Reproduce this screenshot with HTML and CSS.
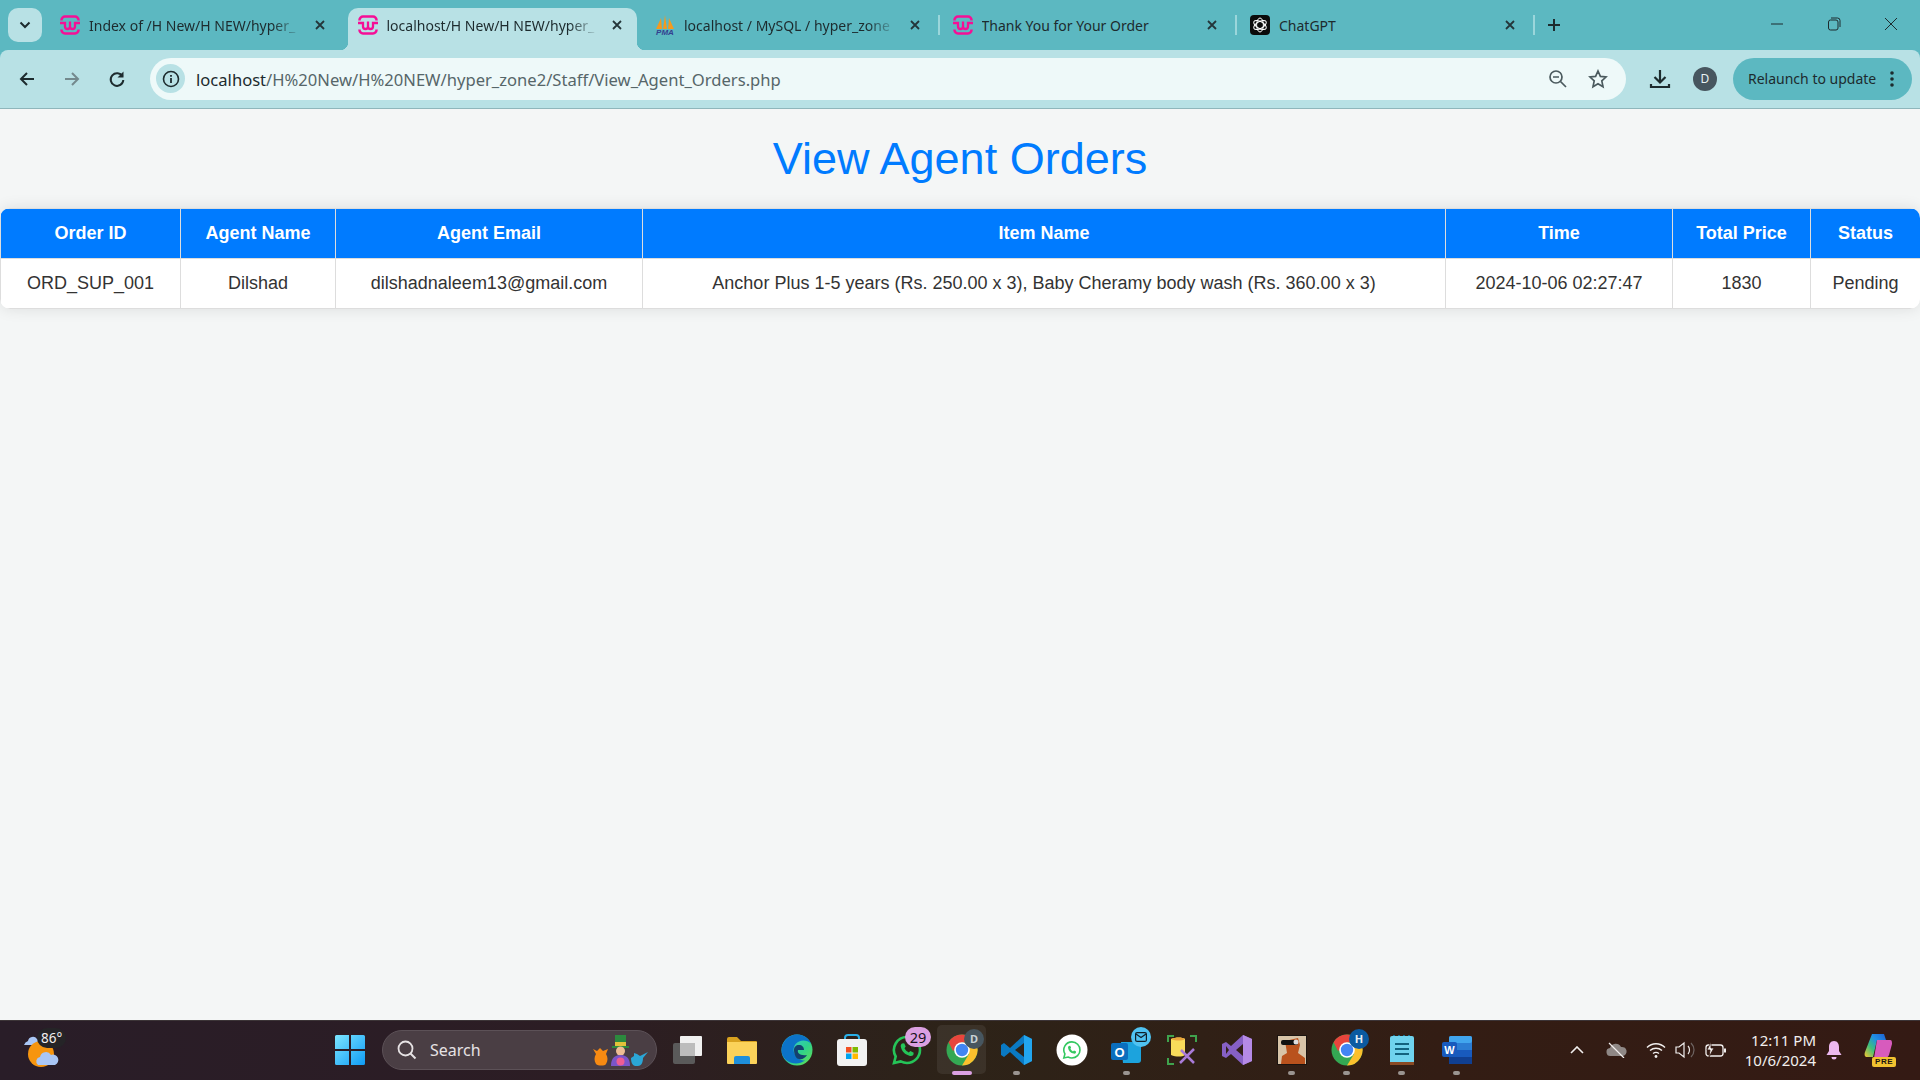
FILE: index.html
```html
<!DOCTYPE html>
<html lang="en">
<head>
  <meta charset="UTF-8">
  <title>View Agent Orders</title>
  <link rel="stylesheet" href="styles.css">
</head>
<body>

  <svg class="defs" width="0" height="0">
    <symbol id="wamp" viewBox="0 0 20 20">
      <path d="M1.500 5.500V5A3.500 3.500 0 0 1 5 1.500h10A3.500 3.500 0 0 1 18.500 5v.5M1.500 14.500v.5A3.500 3.500 0 0 0 5 18.500h10a3.500 3.500 0 0 0 3.500-3.500v-.5" fill="none" stroke="#f50f96" stroke-width="2.500"/>
      <path d="M0 8h5v3.500a2.500 2.500 0 0 0 5 0V6.500v5a2.500 2.500 0 0 0 5 0V8h5" fill="none" stroke="#f50f96" stroke-width="2.300"/>
    </symbol>
    <symbol id="close" viewBox="0 0 12 12">
      <path d="M2 2l8 8M10 2l-8 8" stroke="#24363a" stroke-width="1.800" fill="none"/>
    </symbol>
    <symbol id="chrome" viewBox="0 0 32 32">
      <circle cx="16" cy="16" r="15.500" fill="#34a853"/>
      <path d="M16 .5A15.500 15.500 0 0 1 29.400 8.200L16 8.500 7 17 2.600 8.200A15.500 15.500 0 0 1 16 .5z" fill="#e8453c"/>
      <path d="M29.400 8.200A15.500 15.500 0 0 1 16 31.500L23 20V8.500z" fill="#fbc02d"/>
      <circle cx="16" cy="16" r="7.800" fill="#fff"/>
      <circle cx="16" cy="16" r="6.200" fill="#4285f4"/>
    </symbol>
    <symbol id="whatsapp" viewBox="0 0 32 32">
      <path d="M16 3a13 13 0 0 1 0 26c-2.300 0-4.400-.6-6.300-1.600L3 29l1.700-6.500A13 13 0 0 1 16 3z" fill="none" stroke="currentColor" stroke-width="2.600"/>
      <path d="M11 9.500l2.200-.3 1.500 3.400-1.200 1.700c.9 1.900 2.300 3.200 4.200 4.100l1.700-1.300 3.300 1.600-.4 2.200c-.8 1-2.100 1.300-3.300 1-5-1.200-8.400-4.500-9.300-9.600-.1-1.100.5-2.100 1.300-2.800z" fill="currentColor"/>
    </symbol>
  </svg>

  <div class="window">

    <div class="tabstrip">
      <button class="tab-search">
        <svg width="12" height="8" viewBox="0 0 12 8"><path d="M1.500 1.500L6 6l4.500-4.500" fill="none" stroke="#1d2b2e" stroke-width="2"/></svg>
      </button>

      <div class="tab">
        <svg class="favicon"><use href="#wamp"/></svg>
        <span class="tab-title faded">Index of /H New/H NEW/hyper_</span>
        <svg class="tab-close"><use href="#close"/></svg>
      </div>
      <div class="tab active">
        <svg class="favicon"><use href="#wamp"/></svg>
        <span class="tab-title faded">localhost/H New/H NEW/hyper_</span>
        <svg class="tab-close"><use href="#close"/></svg>
      </div>
      <div class="tab">
        <svg class="favicon" viewBox="0 0 20 20">
          <path d="M1 14L6 3l1 11zM8 14L10 0l2 14zM13 14l1-11 5 11z" fill="#f39a1f"/>
          <text class="pma" x="10" y="20">PMA</text>
        </svg>
        <span class="tab-title faded">localhost / MySQL / hyper_zone</span>
        <svg class="tab-close"><use href="#close"/></svg>
      </div>
      <i class="tab-sep"></i>
      <div class="tab">
        <svg class="favicon"><use href="#wamp"/></svg>
        <span class="tab-title">Thank You for Your Order</span>
        <svg class="tab-close"><use href="#close"/></svg>
      </div>
      <i class="tab-sep"></i>
      <div class="tab">
        <svg class="favicon" viewBox="0 0 20 20">
          <rect width="20" height="20" rx="4" fill="#0b0b0b"/>
          <g fill="none" stroke="#fff" stroke-width="1">
            <ellipse cx="10" cy="10" rx="3.400" ry="7"/>
            <ellipse cx="10" cy="10" rx="3.400" ry="7" transform="rotate(60 10 10)"/>
            <ellipse cx="10" cy="10" rx="3.400" ry="7" transform="rotate(120 10 10)"/>
          </g>
        </svg>
        <span class="tab-title">ChatGPT</span>
        <svg class="tab-close"><use href="#close"/></svg>
      </div>
      <i class="tab-sep"></i>

      <svg class="new-tab" width="14" height="14" viewBox="0 0 14 14"><path d="M7 1v12M1 7h12" stroke="#1d2b2e" stroke-width="2"/></svg>

      <div class="win-controls">
        <svg width="14" height="14" viewBox="0 0 14 14"><path d="M1 7h12" stroke="#1d2b2e"/></svg>
        <svg width="14" height="14" viewBox="0 0 14 14"><rect x="1.500" y="3" width="9.500" height="10" rx="2" fill="none" stroke="#1d2b2e"/><path d="M4 1h6.500A2.500 2.500 0 0 1 13 3.500V10" fill="none" stroke="#1d2b2e"/></svg>
        <svg width="14" height="14" viewBox="0 0 14 14"><path d="M1 1l12 12M13 1L1 13" stroke="#1d2b2e"/></svg>
      </div>
    </div>

    <div class="toolbar">
      <div class="nav-buttons">
        <svg width="18" height="18" viewBox="0 0 18 18"><path d="M16 9H3M9 3L3 9l6 6" fill="none" stroke="#1d2b2e" stroke-width="2"/></svg>
        <svg width="18" height="18" viewBox="0 0 18 18"><path d="M2 9h13M9 3l6 6-6 6" fill="none" stroke="#74898d" stroke-width="2"/></svg>
        <svg width="18" height="18" viewBox="0 0 18 18"><path d="M14.500 6.500A6.300 6.300 0 1 0 15.300 10" fill="none" stroke="#1d2b2e" stroke-width="2"/><path d="M15.500 1.500v6h-6z" fill="#1d2b2e"/></svg>
      </div>

      <div class="omnibox">
        <span class="site-info">
          <svg width="18" height="18" viewBox="0 0 18 18"><circle cx="9" cy="9" r="7.500" fill="none" stroke="#1d2b2e" stroke-width="1.600"/><path d="M9 8v5M9 5v1.800" stroke="#1d2b2e" stroke-width="1.800"/></svg>
        </span>
        <span class="url"><b>localhost</b>/H%20New/H%20NEW/hyper_zone2/Staff/View_Agent_Orders.php</span>
        <svg width="20" height="20" viewBox="0 0 20 20"><circle cx="8" cy="8" r="6" fill="none" stroke="#4b5a5e" stroke-width="1.700"/><path d="M5 8h6M12.500 12.500L18 18" stroke="#4b5a5e" stroke-width="1.700"/></svg>
        <svg width="20" height="20" viewBox="0 0 20 20"><path d="M10 2l2.400 5.400 5.600.6-4.200 3.900 1.200 5.800-5-3-5 3 1.200-5.800L2 8l5.600-.6z" fill="none" stroke="#4b5a5e" stroke-width="1.700"/></svg>
      </div>

      <svg class="download" width="22" height="22" viewBox="0 0 22 22"><path d="M11 2v12M5.500 9l5.500 5.500L16.500 9M2 16v3h18v-3" fill="none" stroke="#1d2b2e" stroke-width="2.200"/></svg>
      <span class="avatar">D</span>
      <div class="relaunch">
        <span>Relaunch to update</span>
        <svg width="4" height="18" viewBox="0 0 4 18"><circle cx="2" cy="3" r="1.800" fill="#1d2b2e"/><circle cx="2" cy="9" r="1.800" fill="#1d2b2e"/><circle cx="2" cy="15" r="1.800" fill="#1d2b2e"/></svg>
      </div>
    </div>

    <main class="page">
      <h1>View Agent Orders</h1>
      <div class="table-wrap">
        <table>
          <colgroup>
            <col class="col-id">
            <col class="col-name">
            <col class="col-email">
            <col class="col-item">
            <col class="col-time">
            <col class="col-price">
            <col class="col-status">
          </colgroup>
          <thead>
            <tr>
              <th>Order ID</th>
              <th>Agent Name</th>
              <th>Agent Email</th>
              <th>Item Name</th>
              <th>Time</th>
              <th>Total Price</th>
              <th>Status</th>
            </tr>
          </thead>
          <tbody>
            <tr>
              <td>ORD_SUP_001</td>
              <td>Dilshad</td>
              <td>dilshadnaleem13@gmail.com</td>
              <td>Anchor Plus 1-5 years (Rs. 250.00 x 3), Baby Cheramy body wash (Rs. 360.00 x 3)</td>
              <td>2024-10-06 02:27:47</td>
              <td>1830</td>
              <td>Pending</td>
            </tr>
          </tbody>
        </table>
      </div>
    </main>

    <footer class="taskbar">
      <div class="weather">
        <svg width="36" height="36" viewBox="0 0 36 36">
          <path d="M4 22a6 6 0 0 1 4-4 5 5 0 0 1 9-2 5 5 0 0 1 3 6z" fill="#a9c6f5" transform="translate(-4 -9)"/>
          <circle cx="17" cy="22" r="13" fill="#f6950f"/>
          <path d="M14 33a4.500 4.500 0 0 1 2-8 6 6 0 0 1 11-2 5 5 0 0 1 4 10z" fill="#a9c6f5"/>
        </svg>
        <span class="temp">86°</span>
      </div>

      <svg class="win-logo" width="30" height="30" viewBox="0 0 30 30">
        <defs>
          <linearGradient id="winGrad" x1="0" y1="0" x2="1" y2="1"><stop offset="0" stop-color="#7ce6ff"/><stop offset="1" stop-color="#0f9bf5"/></linearGradient>
        </defs>
        <path d="M0 1.500A1.500 1.500 0 0 1 1.500 0H14v14H0zM16 0h12.500A1.500 1.500 0 0 1 30 1.500V14H16zM0 16h14v14H1.500A1.500 1.500 0 0 1 0 28.500zM16 16h14v12.500a1.500 1.500 0 0 1-1.500 1.500H16z" fill="url(#winGrad)"/>
      </svg>

      <div class="search">
        <svg width="20" height="20" viewBox="0 0 20 20"><circle cx="8.500" cy="8.500" r="7" fill="none" stroke="#e6e2e4" stroke-width="1.800"/><path d="M13.500 13.500L18.500 18.500" stroke="#e6e2e4" stroke-width="2"/></svg>
        <span class="search-label">Search</span>
        <svg class="search-art" width="58" height="36" viewBox="0 0 58 36">
          <path d="M1 19l4 2 3-3 3 3 5-2-2 5c2 3 2 7 0 10-1 2-8 2-10 0-2-3-2-7 0-10z" fill="#f78a12"/>
          <path d="M23 5h11v9H23z" fill="#2c8a3e"/>
          <path d="M20 16h17v2H20z" fill="#2c8a3e"/>
          <rect x="23" y="12" width="11" height="4" fill="#e2c23a"/>
          <circle cx="28.500" cy="21" r="4.500" fill="#eebd94"/>
          <path d="M19 36c0-6 2-11 9.500-11S38 30 38 36z" fill="#7b55c9"/>
          <circle cx="28.500" cy="31.500" r="4" fill="#ee5d93"/>
          <path d="M39 28l3-2v-3l3 1 3 2 8-4-5 6c0 5-2 8-5 8h-3c-3-1-4-4-4-8z" fill="#2ba6d6"/>
        </svg>
      </div>

      <div class="task-icons">
        <div class="task">
          <svg width="30" height="30" viewBox="0 0 30 30"><rect x="1" y="8" width="22" height="21" rx="2" fill="#5a5a5a"/><rect x="8" y="1" width="22" height="20" rx="1" fill="#f0f0f0"/><rect x="8" y="8" width="15" height="13" fill="#bcbcbc"/></svg>
        </div>
        <div class="task">
          <svg width="32" height="28" viewBox="0 0 32 28"><path d="M1 3a2 2 0 0 1 2-2h8l4 4h15a1 1 0 0 1 1 1v6H1z" fill="#d9a21f"/><path d="M1 6h30v21a1 1 0 0 1-1 1H2a1 1 0 0 1-1-1z" fill="#fbd25a"/><path d="M8 28v-6a2 2 0 0 1 2-2h12a2 2 0 0 1 2 2v6z" fill="#1e8fdb"/></svg>
        </div>
        <div class="task">
          <svg width="32" height="32" viewBox="0 0 32 32">
            <defs><linearGradient id="edgeGrad" x1="0" y1="0" x2="1" y2="1"><stop offset="0" stop-color="#35c1f1"/><stop offset=".6" stop-color="#2fd28c"/><stop offset="1" stop-color="#68e04c"/></linearGradient></defs>
            <circle cx="16" cy="16" r="15.500" fill="url(#edgeGrad)"/>
            <path d="M.5 16C1 7 8 .5 16 .5c7 0 12 4 14 9-3-3-8-4-12-2-5 2-7 8-4 13 2 4 6 6 10 6-3 2-6 3-9 3C7 29.500.5 24 .5 16z" fill="#0c73c8"/>
            <path d="M13 16c0-3 2-5 5-5s5 2 5 5h-6c-1 3 2 6 9 5-2 3-5 5-8 4-3 0-5-5-5-9z" fill="#14406f"/>
          </svg>
        </div>
        <div class="task">
          <svg width="30" height="32" viewBox="0 0 30 32"><path d="M8 8V4a3 3 0 0 1 3-3h8a3 3 0 0 1 3 3v4" fill="none" stroke="#2ab0e8" stroke-width="2"/><rect y="5" width="30" height="27" rx="3" fill="#f2f2f2"/><rect x="9" y="13" width="5.500" height="5.500" fill="#f25022"/><rect x="15.500" y="13" width="5.500" height="5.500" fill="#7fba00"/><rect x="9" y="19.500" width="5.500" height="5.500" fill="#00a4ef"/><rect x="15.500" y="19.500" width="5.500" height="5.500" fill="#ffb900"/></svg>
        </div>
        <div class="task wa-green">
          <svg width="32" height="32"><use href="#whatsapp"/></svg>
          <span class="badge-count">29</span>
        </div>
        <div class="task running">
          <svg width="32" height="32"><use href="#chrome"/></svg>
          <span class="badge-profile">D</span>
          <i class="indicator wide"></i>
        </div>
        <div class="task">
          <svg width="32" height="32" viewBox="0 0 32 32"><path d="M23 1l8 4v22l-8 4-14-13-6 5-3-2v-10l3-2 6 5z" fill="#0a7ac4"/><path d="M23 1l8 4v22l-8 4V1z" fill="#22a5ee"/><path d="M23 9v14l-9-7z" fill="#2e2418"/><path d="M3 10l3 2-3 4 3 4-3 2-3-2v-8z" fill="#0a7ac4"/></svg>
          <i class="indicator"></i>
        </div>
        <div class="task">
          <svg width="32" height="32" viewBox="0 0 32 32"><circle cx="16" cy="16" r="15.500" fill="#fff"/><g color="#34c860" transform="translate(6 6) scale(.62)"><use href="#whatsapp" width="32" height="32"/></g></svg>
        </div>
        <div class="task">
          <svg width="32" height="30" viewBox="0 0 32 30"><path d="M10 7h20v18a3 3 0 0 1-3 3H12z" fill="#1ca3dd"/><rect y="8" width="17" height="17" rx="2" fill="#0a6ebd"/><text class="app-letter" x="8.500" y="21.500">O</text></svg>
          <span class="badge-mail">
            <svg width="12" height="10" viewBox="0 0 12 10"><rect x=".6" y=".6" width="10.800" height="8.800" rx="1.500" fill="none" stroke="#10202a" stroke-width="1.200"/><path d="M1 2l5 3.500L11 2" fill="none" stroke="#10202a" stroke-width="1.200"/></svg>
          </span>
          <i class="indicator"></i>
        </div>
        <div class="task">
          <svg width="30" height="30" viewBox="0 0 30 30"><path d="M1 7V1h6M23 1h6v6M1 23v6h6" fill="none" stroke="#3fa34d" stroke-width="2"/><path d="M4 4c5-2 11-2 14 0v16c-3 2-9 2-14 0z" fill="#f8dc5a"/><path d="M4 4c5-2 11-2 14 0-3 2-9 2-14 0z" fill="#e9a53b"/><path d="M13 28L27 14M14 15l13 13" stroke="#a97bd8" stroke-width="2.500"/></svg>
        </div>
        <div class="task">
          <svg width="30" height="30" viewBox="0 0 30 30"><path d="M21 0l9 4v22l-9 4-12-11-5 4-4-2V9l4-2 5 4z" fill="#8660c5"/><path d="M21 0l9 4v22l-9 4z" fill="#b58ae6"/><path d="M21 9v12l-7-6zM4 11l3 4-3 4z" fill="#33201a"/></svg>
        </div>
        <div class="task">
          <svg width="30" height="30" viewBox="0 0 30 30"><rect width="30" height="30" fill="#1b1410"/><rect x="1" y="1" width="28" height="28" fill="#d8c4a8"/><path d="M8 6l13-3 2 7-2 8 7 5v6H4l1-8 5-3z" fill="#b9521d"/><rect x="4" y="5" width="17" height="5" rx="2" fill="#111"/><circle cx="19" cy="7" r="2.500" fill="#ddd"/></svg>
          <i class="indicator"></i>
        </div>
        <div class="task">
          <svg width="32" height="32"><use href="#chrome"/></svg>
          <span class="badge-profile blue">H</span>
          <i class="indicator"></i>
        </div>
        <div class="task">
          <svg width="24" height="30" viewBox="0 0 24 30"><rect y="1" width="24" height="29" rx="2" fill="#6fd3ee"/><rect y="27" width="24" height="3" fill="#8a4a24"/><path d="M4 1V0M9 1V0M14 1V0M19 1V0" stroke="#1a6f8c" stroke-width="2"/><path d="M5 9h14M5 14h14M5 19h14" stroke="#13637f" stroke-width="2"/></svg>
          <i class="indicator"></i>
        </div>
        <div class="task">
          <svg width="30" height="28" viewBox="0 0 30 28"><rect x="7" width="23" height="28" rx="2" fill="#2b7cd3"/><rect x="7" width="23" height="7" rx="2" fill="#41a5ee"/><rect x="7" y="14" width="23" height="7" fill="#185abd"/><rect x="7" y="21" width="23" height="7" fill="#103f91"/><rect y="6" width="15" height="15" rx="2" fill="#185abd"/><text class="app-letter small" x="7.500" y="18">W</text></svg>
          <i class="indicator"></i>
        </div>
      </div>

      <div class="tray">
        <svg class="tray-chevron" width="14" height="8" viewBox="0 0 14 8"><path d="M1 7l6-6 6 6" fill="none" stroke="#f2efee" stroke-width="1.600"/></svg>
        <svg class="tray-cloud" width="22" height="16" viewBox="0 0 22 16"><path d="M5 14a4 4 0 0 1-1-8 6 6 0 0 1 11-1 4.500 4.500 0 0 1 2 9z" fill="#8f8886"/><path d="M3 1l15 15" stroke="#f2efee" stroke-width="1.200"/></svg>
        <svg class="tray-wifi" width="20" height="16" viewBox="0 0 20 16"><path d="M1 5.500c5-5 13-5 18 0M4 8.500c3.500-3 8.500-3 12 0M7 11.500c2-1.500 4-1.500 6 0" fill="none" stroke="#f2efee" stroke-width="1.400"/><circle cx="10" cy="14.500" r="1.400" fill="#f2efee"/></svg>
        <svg class="tray-sound" width="22" height="18" viewBox="0 0 22 18"><path d="M1 6h3l5-4v14l-5-4H1z" fill="none" stroke="#f2efee" stroke-width="1.200"/><path d="M13 5c2 2 2 6 0 8" fill="none" stroke="#f2efee" stroke-width="1.200"/><path d="M16 2c4 4 4 10 0 14" fill="none" stroke="#6e6462" stroke-width="1.200"/></svg>
        <svg class="tray-battery" width="22" height="16" viewBox="0 0 22 16"><rect x="1" y="3" width="17" height="11" rx="2.500" fill="none" stroke="#f2efee" stroke-width="1.300"/><rect x="19" y="6.500" width="2" height="4" fill="#f2efee"/><path d="M6 0L2 8h3l-1 7 5-9H6z" fill="#f2efee" stroke="#33180f" stroke-width=".8"/></svg>
        <div class="clock">
          <span>12:11 PM</span>
          <span>10/6/2024</span>
        </div>
        <svg class="tray-bell" width="16" height="20" viewBox="0 0 16 20"><path d="M8 1c3.500 0 5 3 5 6v4l2.500 4H.5L3 11V7c0-3 1.500-6 5-6z" fill="#ecb8ef"/><path d="M5.500 17h5a2.500 2.500 0 0 1-5 0z" fill="#ecb8ef"/></svg>
        <div class="copilot">
          <svg width="28" height="26" viewBox="0 0 28 26">
            <defs><linearGradient id="copGrad" x1="0" y1="1" x2="1" y2="0"><stop offset="0" stop-color="#f7c62f"/><stop offset=".35" stop-color="#3fbf7a"/><stop offset=".65" stop-color="#1f8fe6"/><stop offset="1" stop-color="#1f5fd0"/></linearGradient></defs>
            <path d="M8 1h12l2 6H13L9 24H3c-2 0-3-2-2-5z" fill="url(#copGrad)"/>
            <path d="M13 7h13c2 0 2 2 2 4l-3 11c-1 2-2 3-4 3H10z" fill="#d75bbd"/>
          </svg>
          <span class="pre">PRE</span>
        </div>
      </div>
    </footer>

  </div>

</body>
</html>
```

FILE: styles.css
```css
* {
  box-sizing: border-box;
}

body {
  margin: 0;
  font-family: "Liberation Sans", Arial, sans-serif;
  color: #333;
  background: #f4f6f6;
}

.defs {
  position: absolute;
}

.window {
  display: flex;
  flex-direction: column;
  height: 1080px;
  overflow: hidden;
  background: #5cb8c1;
}

/* tab strip */

.tabstrip {
  display: flex;
  align-items: flex-end;
  height: 50px;
  padding-left: 8px;
  background: #5cb8c1;
  font-family: "Noto Sans", sans-serif;
}

.tab-search {
  display: flex;
  align-items: center;
  justify-content: center;
  width: 34px;
  height: 34px;
  margin: 0 8px 8px 0;
  padding: 0;
  border: 0;
  border-radius: 10px;
  background: #b8e1e5;
}

.tab {
  position: relative;
  display: flex;
  align-items: center;
  flex: none;
  width: 289.500px;
  height: 42px;
  padding: 0 14px 8px 12px;
  margin-right: 8px;
  border-radius: 10px 10px 0 0;
  font-size: 14px;
  color: #1d2b2e;
}

.tab.active {
  background: #b8e1e5;
}

.tab.active::before,
.tab.active::after {
  content: "";
  position: absolute;
  bottom: 0;
  width: 8px;
  height: 8px;
}

.tab.active::before {
  left: -8px;
  background: radial-gradient(circle at 0 0, transparent 8px, #b8e1e5 8.5px);
}

.tab.active::after {
  right: -8px;
  background: radial-gradient(circle at 100% 0, transparent 8px, #b8e1e5 8.5px);
}

.favicon {
  flex: none;
  width: 20px;
  height: 20px;
  margin-left: -2px;
}

.pma {
  font: italic bold 8px "Liberation Sans", sans-serif;
  fill: #33408f;
  text-anchor: middle;
}

.tab-title {
  flex: 1;
  min-width: 0;
  margin-left: 9px;
  white-space: nowrap;
  overflow: hidden;
}

.tab-title.faded {
  -webkit-mask-image: linear-gradient(to right, #000 86%, transparent);
  mask-image: linear-gradient(to right, #000 86%, transparent);
}

.tab-close {
  flex: none;
  width: 12px;
  height: 12px;
  margin-left: 12px;
}

.tab-sep {
  flex: none;
  width: 2px;
  height: 20px;
  margin: 0 3px 15px -5px;
  background: #9bd6db;
}

.new-tab {
  margin: 0 0 18px 9px;
}

.win-controls {
  display: flex;
  align-items: center;
  gap: 43px;
  margin: 0 22px 19px auto;
}

/* toolbar */

.toolbar {
  display: flex;
  align-items: center;
  height: 59px;
  padding-bottom: 1px;
  background: #b8e1e5;
  border-bottom: 1px solid #8fb6bb;
  border-radius: 8px 8px 0 0;
}

.nav-buttons {
  display: flex;
  align-items: center;
  gap: 27px;
  width: 150px;
  padding-left: 18px;
}

.omnibox {
  display: flex;
  align-items: center;
  gap: 20px;
  width: 1476px;
  height: 42px;
  padding: 0 18px 0 6px;
  border-radius: 21px;
  background: #eef9f9;
}

.site-info {
  display: flex;
  align-items: center;
  justify-content: center;
  flex: none;
  width: 29px;
  height: 29px;
  margin-right: -9px;
  border-radius: 50%;
  background: #b8e1e5;
}

.url {
  flex: 1;
  padding-top: 2px;
  font: 16.600px "Noto Sans", sans-serif;
  color: #566669;
  white-space: nowrap;
}

.url b {
  font-weight: normal;
  color: #1d2b2e;
}

.download {
  margin-left: 23px;
}

.avatar {
  display: flex;
  align-items: center;
  justify-content: center;
  width: 24px;
  height: 24px;
  margin-left: 22px;
  border-radius: 50%;
  background: #47565f;
  color: #e8f2f3;
  font: 12px "Noto Sans", sans-serif;
}

.relaunch {
  display: flex;
  align-items: center;
  justify-content: space-between;
  width: 179px;
  height: 42px;
  margin-left: 16px;
  padding: 0 18px 0 15px;
  border-radius: 21px;
  background: #5cb8c1;
  font: 14px "Noto Sans", sans-serif;
  color: #1d2b2e;
}

/* page */

.page {
  flex: 1;
  padding-top: 24px;
  background: #f4f6f6;
}

h1 {
  margin: 0 0 23px;
  font-size: 45px;
  font-weight: normal;
  line-height: 52px;
  text-align: center;
  color: #007bff;
}

.table-wrap {
  border-radius: 10px;
  overflow: hidden;
  background: #fff;
  box-shadow: 0 0 15px rgba(0,0,0,0.1);
}

table {
  width: 100%;
  table-layout: fixed;
  border-collapse: collapse;
  font-size: 18px;
}

.col-id { width: 180px; }
.col-name { width: 155px; }
.col-email { width: 307px; }
.col-item { width: 803px; }
.col-time { width: 227px; }
.col-price { width: 138px; }
.col-status { width: 110px; }

th, td {
  padding: 14px 0;
  border: 1px solid #ddd;
  text-align: center;
}

th {
  background: #007bff;
  color: #fff;
}

/* taskbar */

.taskbar {
  display: flex;
  align-items: center;
  height: 60px;
  padding-bottom: 2px;
  border-top: 1px solid #3c3437;
  background: linear-gradient(to right, #291d28, #2c1d24 30%, #2d2318 50%, #331d14 75%, #341a14);
  font-family: "Noto Sans", sans-serif;
  color: #f2efee;
}

.weather {
  position: relative;
  width: 36px;
  height: 36px;
  margin-left: 24px;
}

.temp {
  position: absolute;
  top: -4px;
  left: 13px;
  padding: 2px 4px;
  border-radius: 12px;
  background: #252427;
  font-size: 13.500px;
  line-height: 16px;
}

.win-logo {
  margin-left: 275px;
}

.search {
  display: flex;
  align-items: center;
  width: 275px;
  height: 40px;
  margin-left: 17px;
  padding: 0 6px 0 14px;
  border: 1px solid #5c5157;
  border-radius: 20px;
  background: #4a3e44;
}

.search-label {
  flex: 1;
  margin-left: 13px;
  font-size: 16px;
  color: #e6e2e4;
}

.search-art {
  margin-top: -4px;
}

.task-icons {
  display: flex;
  margin-left: 2px;
}

.task {
  position: relative;
  display: flex;
  align-items: center;
  justify-content: center;
  width: 55px;
  height: 49px;
}

.task.running::before {
  content: "";
  position: absolute;
  inset: 0 3px;
  border-radius: 5px;
  background: rgba(255,255,255,0.07);
}

.task svg {
  position: relative;
}

.wa-green {
  color: #25c458;
}

.indicator {
  position: absolute;
  left: 24px;
  bottom: -1px;
  width: 7px;
  height: 4px;
  border-radius: 2px;
  background: #9a9490;
}

.indicator.wide {
  left: 18px;
  width: 20px;
  background: #dba0e2;
}

.badge-count {
  position: absolute;
  top: 2px;
  right: 3px;
  width: 26px;
  height: 20px;
  border-radius: 10px;
  background: #dba0e2;
  color: #17121a;
  font-size: 14.500px;
  line-height: 20px;
  text-align: center;
}

.badge-profile {
  position: absolute;
  top: 4px;
  right: 5px;
  width: 20px;
  height: 20px;
  border-radius: 50%;
  background: #47565f;
  color: #c8d2d6;
  font-size: 11px;
  font-weight: bold;
  line-height: 20px;
  text-align: center;
}

.badge-profile.blue {
  background: #0b5aa0;
  color: #e6eef5;
}

.badge-mail {
  position: absolute;
  top: 2px;
  right: 3px;
  display: flex;
  align-items: center;
  justify-content: center;
  width: 20px;
  height: 20px;
  border-radius: 50%;
  background: #4fc3f2;
}

.app-letter {
  font: bold 13px "Liberation Sans", sans-serif;
  fill: #fff;
  text-anchor: middle;
}

.app-letter.small {
  font-size: 11px;
}

.tray {
  display: flex;
  align-items: center;
  margin-left: auto;
}

.tray-cloud {
  margin-left: 22px;
}

.tray-wifi {
  margin-left: 18px;
}

.tray-sound {
  margin-left: 9px;
}

.tray-battery {
  margin-left: 8px;
}

.clock {
  display: flex;
  flex-direction: column;
  align-items: flex-end;
  margin-left: 18px;
  font-size: 15px;
  line-height: 20px;
}

.tray-bell {
  margin-left: 10px;
}

.copilot {
  position: relative;
  width: 32px;
  height: 34px;
  margin: 0 24px 0 22px;
}

.pre {
  position: absolute;
  right: 0;
  bottom: 0;
  padding: 0 3px;
  border-radius: 2px;
  background: #f2c230;
  color: #1a1410;
  font: bold 8px/10px "Liberation Sans", sans-serif;
  letter-spacing: 0.5px;
}
```
